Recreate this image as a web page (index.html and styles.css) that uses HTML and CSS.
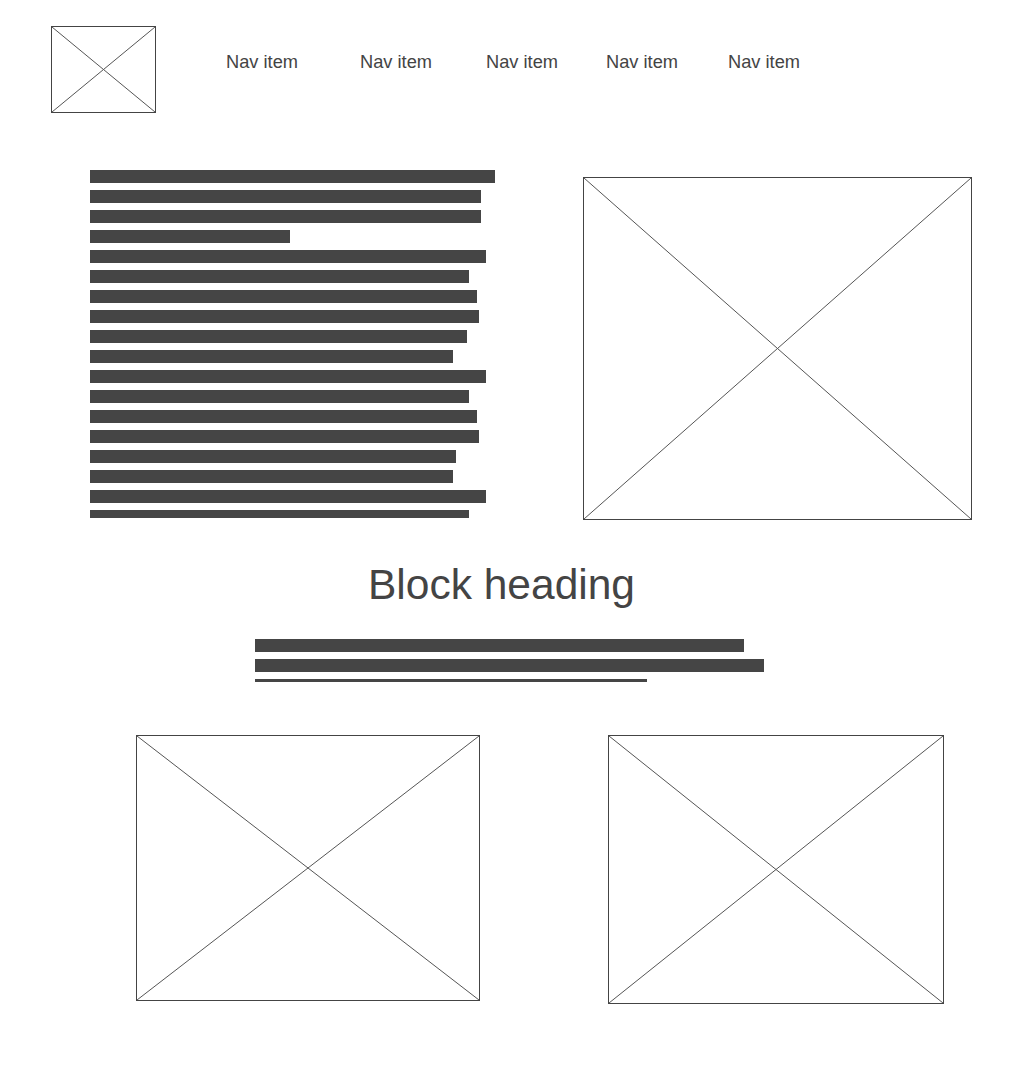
FILE: index.html
```html
<!DOCTYPE HTML>
<html>
  <head>
    <meta charset="UTF-8">
    <title>wireframe</title>
    <link rel="stylesheet" href="styles.css">
  </head>

  <body>
    <header class="top">
      <div class="ph logo">
        <svg><line x1="0" y1="0" x2="100%" y2="100%"/><line x1="100%" y1="0" x2="0" y2="100%"/></svg>
      </div>
      <nav class="nav">
        <a href="#" class="nav-item n1">Nav item</a>
        <a href="#" class="nav-item n2">Nav item</a>
        <a href="#" class="nav-item n3">Nav item</a>
        <a href="#" class="nav-item n4">Nav item</a>
        <a href="#" class="nav-item">Nav item</a>
      </nav>
    </header>

    <section class="hero">
      <div class="lines lines-hero">
        <span style="width:405px"></span>
        <span style="width:391px"></span>
        <span style="width:391px"></span>
        <span style="width:200px"></span>
        <span style="width:396px"></span>
        <span style="width:379px"></span>
        <span style="width:387px"></span>
        <span style="width:389px"></span>
        <span style="width:377px"></span>
        <span style="width:363px"></span>
        <span style="width:396px"></span>
        <span style="width:379px"></span>
        <span style="width:387px"></span>
        <span style="width:389px"></span>
        <span style="width:366px"></span>
        <span style="width:363px"></span>
        <span style="width:396px"></span>
        <span style="width:379px"></span>
      </div>
      <div class="ph hero-img">
        <svg><line x1="0" y1="0" x2="100%" y2="100%"/><line x1="100%" y1="0" x2="0" y2="100%"/></svg>
      </div>
    </section>

    <section class="block">
      <h2 class="block-title">Block heading</h2>
      <div class="lines lines-block">
        <span style="width:489px"></span>
        <span style="width:509px"></span>
        <span style="width:392px"></span>
      </div>
    </section>

    <section class="gallery">
      <div class="ph pic-left">
        <svg><line x1="0" y1="0" x2="100%" y2="100%"/><line x1="100%" y1="0" x2="0" y2="100%"/></svg>
      </div>
      <div class="ph pic-right">
        <svg><line x1="0" y1="0" x2="100%" y2="100%"/><line x1="100%" y1="0" x2="0" y2="100%"/></svg>
      </div>
    </section>
  </body>
</html>
```

FILE: styles.css
```css
body {
  margin: 0;
  font-family: "Liberation Sans", Arial, sans-serif;
  color: #444444;
  background: #ffffff;
}

/* placeholder box with the cross */
.ph {
  box-sizing: border-box;
  border: 1px solid #444444;
}

.ph svg {
  display: block;
  width: 100%;
  height: 100%;
}

.ph line {
  stroke: #555555;
  stroke-width: 1;
}

.top {
  display: flex;
  align-items: flex-start;
  padding: 26px 0 0 51px;
}

.logo {
  width: 105px;
  height: 87px;
}

.nav {
  display: flex;
  margin: 25px 0 0 70px;
}

.nav-item {
  font-size: 18.25px;
  color: #444444;
  text-decoration: none;
}

.n1 { width: 134px; }
.n2 { width: 126px; }
.n3 { width: 120px; }
.n4 { width: 122px; }

.hero {
  display: flex;
  align-items: flex-start;
  padding-left: 90px;
  margin-top: 57px;
}

.lines span {
  display: block;
  height: 13px;
  margin-bottom: 7px;
  background: #454545;
}

.lines-hero {
  width: 405px;
  height: 348px;
  overflow: hidden;
}

.hero-img {
  width: 389px;
  height: 343px;
  margin: 7px 0 0 88px;
}

.block {
  margin-top: 41px;
}

.block-title {
  margin: 0;
  font-size: 42.5px;
  line-height: 48px;
  font-weight: normal;
  text-align: center;
  padding-right: 21px;
}

.lines-block {
  margin: 30px 0 0 255px;
  height: 43px;
  overflow: hidden;
}

.gallery {
  display: flex;
  align-items: flex-start;
  padding-left: 136px;
  margin-top: 53px;
}

.pic-left {
  width: 344px;
  height: 266px;
}

.pic-right {
  width: 336px;
  height: 269px;
  margin-left: 128px;
}
```
